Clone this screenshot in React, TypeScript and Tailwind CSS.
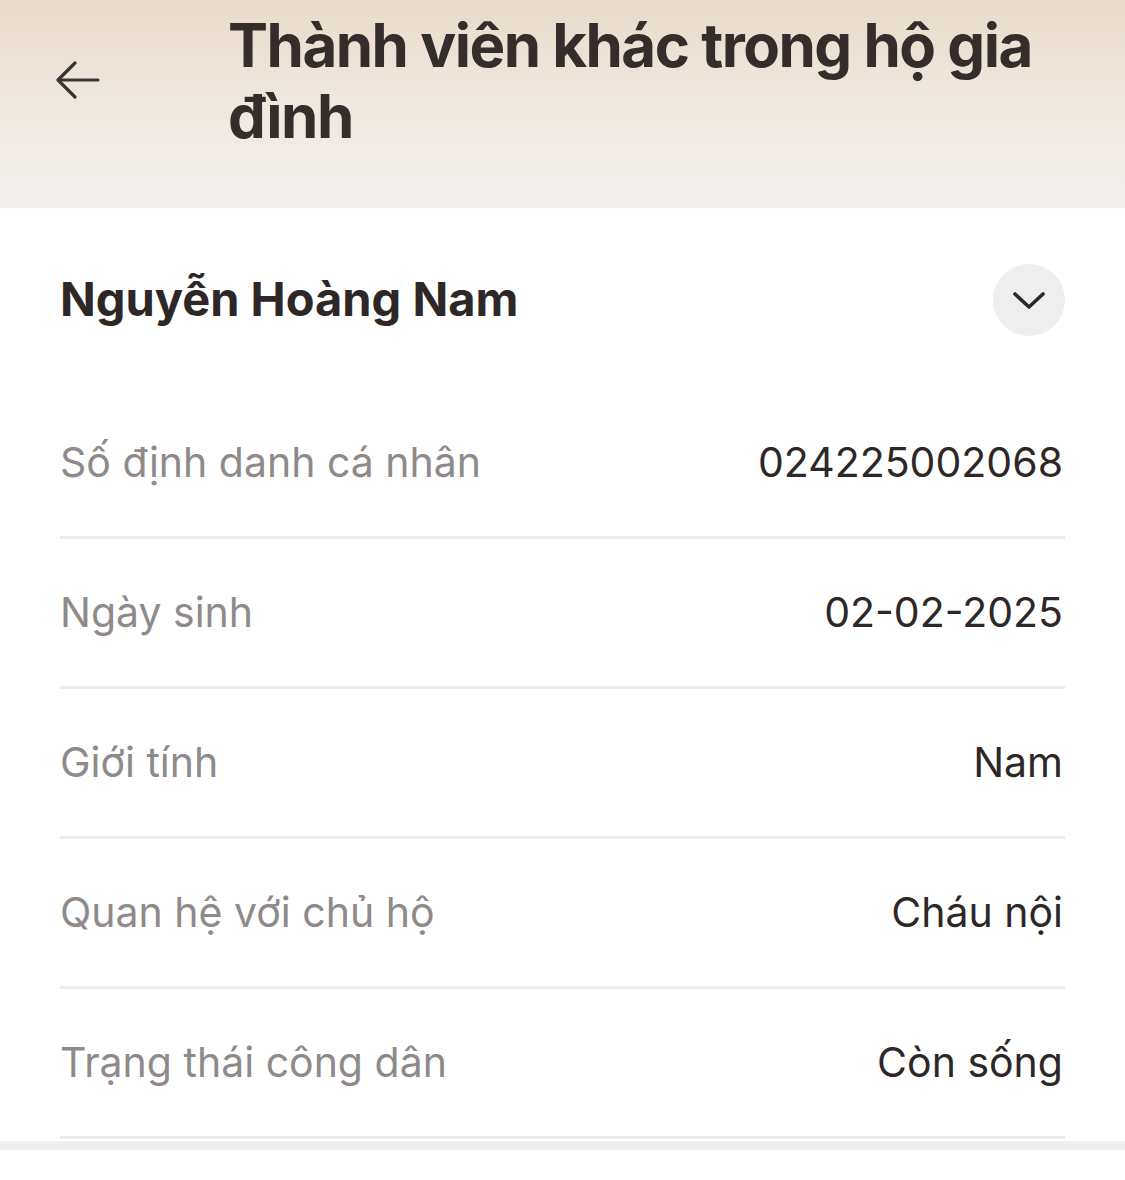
const rows = [
  { label: "Số định danh cá nhân", value: "024225002068" },
  { label: "Ngày sinh", value: "02-02-2025" },
  { label: "Giới tính", value: "Nam" },
  { label: "Quan hệ với chủ hộ", value: "Cháu nội" },
  { label: "Trạng thái công dân", value: "Còn sống" },
];

export default function App() {
  return (
    <div className="w-[1125px] h-[1180px] bg-white font-['Inter',sans-serif] overflow-hidden">
      <header className="h-[208px] bg-gradient-to-b from-[#e8dbca] via-[#f0e8df] to-[#f1efed] flex">
        <div className="w-[228px] shrink-0 pl-[56px] pt-[60px]">
          <svg width="44" height="40" viewBox="0 0 44 40" fill="none" stroke="#3a3535" strokeWidth="3.2" strokeLinecap="round" strokeLinejoin="round">
            <path d="M42 20H3" />
            <path d="M19 3L2 20l17 17" />
          </svg>
        </div>
        <h1 className="pt-[10px] pr-[60px] text-[60px] leading-[71px] font-bold tracking-[-1.5px] text-[#352c2c]">
          Thành viên khác trong hộ gia đình
        </h1>
      </header>
      <main className="px-[60px]">
        <div className="h-[181px] flex items-center justify-between pt-[2px]">
          <span className="text-[47px] font-bold text-[#2e2727]">Nguyễn Hoàng Nam</span>
          <span className="w-[72px] h-[72px] rounded-full bg-[#efeeee] flex items-center justify-center">
            <svg width="34" height="20" viewBox="0 0 34 20" fill="none" stroke="#2e2727" strokeWidth="3.6" strokeLinecap="round" strokeLinejoin="round">
              <path d="M3 4l14 13L31 4" />
            </svg>
          </span>
        </div>
        {rows.map((r) => (
          <div key={r.label} className="h-[150px] flex items-center justify-between border-b-[3px] border-[#ececec]">
            <span className="text-[41px] text-[#8f8a8a]">{r.label}</span>
            <span className="text-[41px] text-[#2e2727] pr-[2px]">{r.value}</span>
          </div>
        ))}
      </main>
      <div className="mt-[2px] h-[9px] bg-[#efefef]" />
    </div>
  );
}
